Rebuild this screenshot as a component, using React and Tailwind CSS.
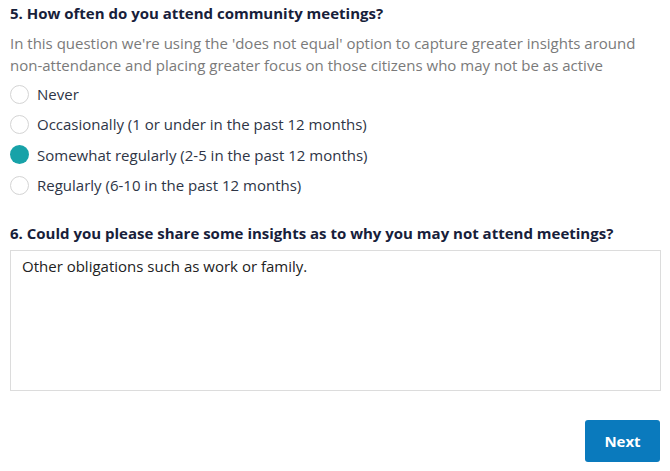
import React, { useState } from 'react';

const options = [
    'Never',
    'Occasionally (1 or under in the past 12 months)',
    'Somewhat regularly (2-5 in the past 12 months)',
    'Regularly (6-10 in the past 12 months)',
];

const Radio = ({ label, checked, onSelect }) => (
    <button
        type="button"
        onClick={onSelect}
        className="flex items-center gap-[8px] h-[30px] text-left"
    >
        <span
            className={`w-[19px] h-[19px] rounded-full shrink-0 ${
                checked ? 'bg-[#17a2a8]' : 'border border-[#d4d4d4] bg-white'
            }`}
        />
        <span className="text-[15px] text-[#2e3546]">{label}</span>
    </button>
);

export default function App() {
    const [selected, setSelected] = useState(2);
    const [answer, setAnswer] = useState('Other obligations such as work or family.');

    return (
        <div className="w-[670px] h-[471px] bg-white px-[10px] pt-[2px] font-['Open_Sans',sans-serif]">
            <h2 className="text-[15px] font-bold text-[#17203a] leading-[22px]">
                5. How often do you attend community meetings?
            </h2>
            <p className="mt-[8px] text-[15px] leading-[22px] text-[#7a7a7a]">
                In this question we're using the 'does not equal' option to capture greater insights around
                non-attendance and placing greater focus on those citizens who may not be as active
            </p>
            <div className="mt-[3px] flex flex-col gap-[0.4px]">
                {options.map((opt, i) => (
                    <Radio key={opt} label={opt} checked={selected === i} onSelect={() => setSelected(i)} />
                ))}
            </div>

            <h2 className="mt-[22px] text-[15px] font-bold text-[#17203a] leading-[22px]">
                6. Could you please share some insights as to why you may not attend meetings?
            </h2>
            <textarea
                value={answer}
                onChange={(e) => setAnswer(e.target.value)}
                className="mt-[6px] block w-[651px] h-[141px] border border-[#dcdcdc] px-[11px] py-[4px] text-[15px] leading-[22px] text-[#222] resize-none outline-none"
            />

            <div className="flex justify-end mt-[29px]">
                <button className="w-[75px] h-[42px] rounded-[3px] bg-[#0a7abd] text-white font-bold text-[15px]">
                    Next
                </button>
            </div>
        </div>
    );
}
